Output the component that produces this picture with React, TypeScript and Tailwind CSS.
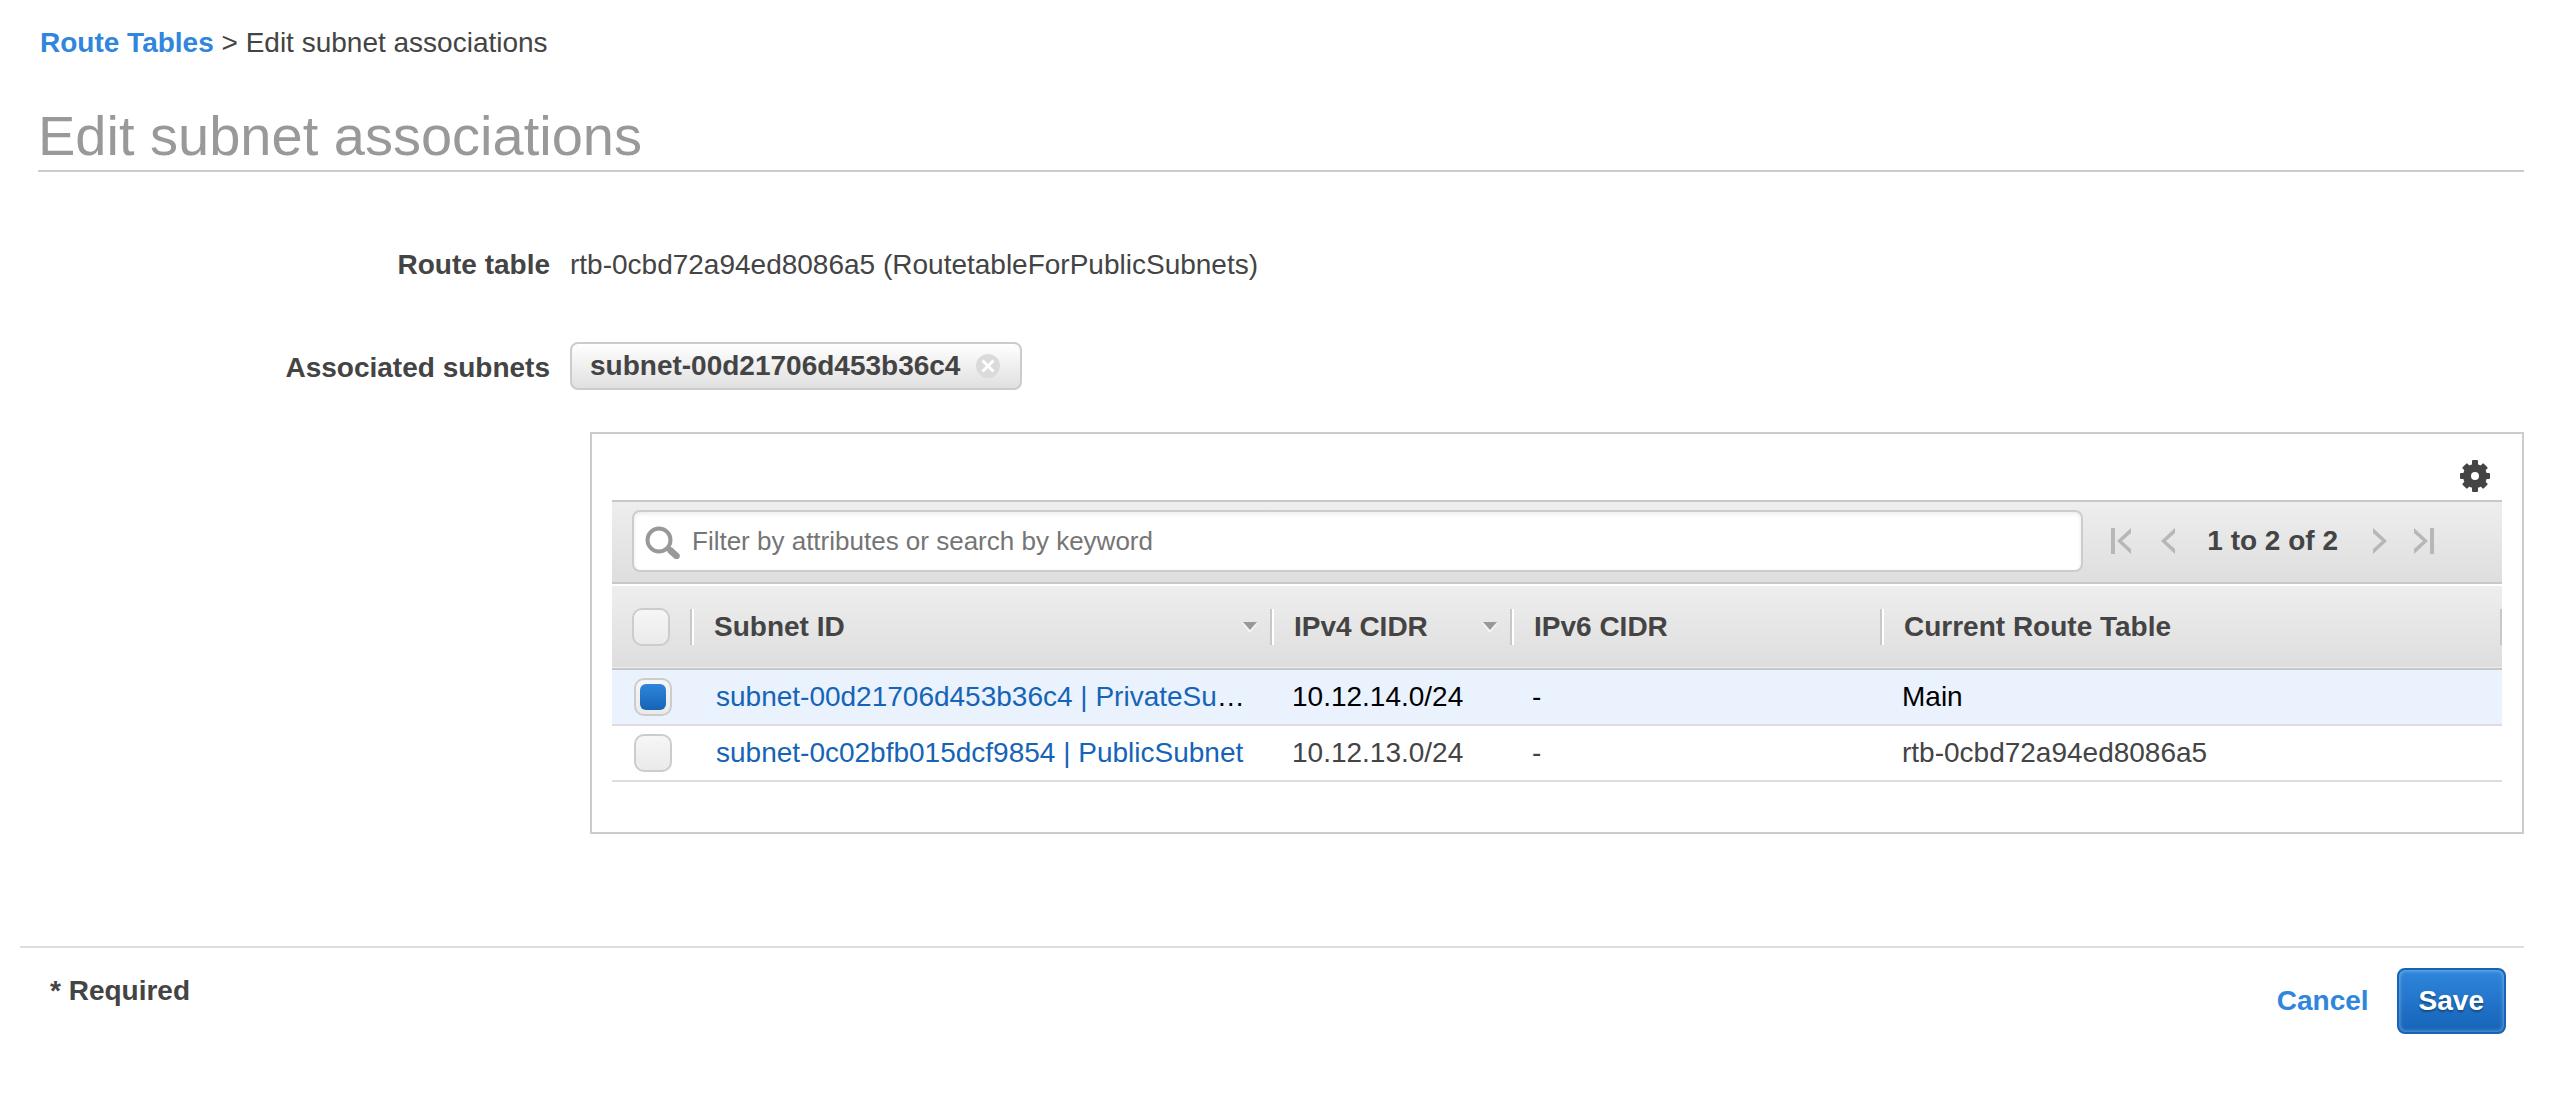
import { useState } from 'react';

const columns = [
  { label: 'Subnet ID', width: 'w-[580px]', sortable: true },
  { label: 'IPv4 CIDR', width: 'w-[240px]', sortable: true },
  { label: 'IPv6 CIDR', width: 'w-[370px]', sortable: false },
  { label: 'Current Route Table', width: '', sortable: false }
];

const subnets = [
  {
    id: 'subnet-00d21706d453b36c4',
    name: 'PrivateSubnet',
    ipv4: '10.12.14.0/24',
    ipv6: '-',
    routeTable: 'Main'
  },
  {
    id: 'subnet-0c02bfb015dcf9854',
    name: 'PublicSubnet',
    ipv4: '10.12.13.0/24',
    ipv6: '-',
    routeTable: 'rtb-0cbd72a94ed8086a5'
  }
];

const SearchIcon = () => (
  <svg className="h-9 w-9 shrink-0" viewBox="0 0 36 36" fill="none" stroke="#999" aria-hidden="true">
    <circle cx="14" cy="17" r="11.5" strokeWidth="4" />
    <path d="M22 24.5l3 2.5" strokeWidth="4" />
    <path d="M25.5 27.5l6 5.5" strokeWidth="6.5" strokeLinecap="round" />
  </svg>
);

const GearIcon = () => (
  <svg className="h-8 w-8" viewBox="0 0 32 32" aria-hidden="true">
    <g fill="#444">
      <rect x="13" y="0" width="6" height="32" rx="1" />
      <rect x="1" y="13" width="30" height="6" rx="1" />
      <rect x="12.5" y="1" width="7" height="30" rx="1" transform="rotate(45 16 16)" />
      <rect x="12.5" y="1" width="7" height="30" rx="1" transform="rotate(-45 16 16)" />
      <circle cx="16" cy="16" r="12" />
    </g>
    <circle cx="16" cy="16" r="4" fill="#fff" />
  </svg>
);

const PagerButton = ({ label, path }: { label: string; path: string }) => (
  <button type="button" aria-label={label}>
    <svg className="h-7 w-6" viewBox="0 0 24 28" fill="#b7b7b7" aria-hidden="true">
      <path d={path} />
    </svg>
  </button>
);

const Checkbox = ({ label, checked, onChange }: { label: string; checked: boolean; onChange: () => void }) => (
  <span className="grid h-[38px] w-[38px]">
    <input
      type="checkbox"
      aria-label={label}
      checked={checked}
      onChange={onChange}
      className="peer col-start-1 row-start-1 h-[38px] w-[38px] appearance-none rounded-[10px] border-2 border-[#ccc] bg-linear-to-b from-[#f6f6f6] to-[#eaeaea]"
    />
    <span className="pointer-events-none invisible col-start-1 row-start-1 m-1.5 rounded-md bg-linear-to-b from-[#2f86dc] to-[#1564b8] peer-checked:visible" />
  </span>
);

const Divider = () => <span className="h-9 w-1 shrink-0 border-l-2 border-[#c8c8c8] bg-white" />;

export default function App() {
  const [selected, setSelected] = useState<string[]>([subnets[0].id]);

  const toggle = (id: string) =>
    setSelected((prev) => (prev.includes(id) ? prev.filter((s) => s !== id) : [...prev, id]));

  const allSelected = selected.length === subnets.length;

  return (
    <main className="bg-white pt-[25px] pr-7 pl-5 font-['Liberation_Sans',Arial,sans-serif] text-[28px] leading-9 text-[#444]">
      <nav className="pl-5" aria-label="Breadcrumb">
        <a href="#" className="font-bold text-[#2f86dc]">Route Tables</a>
        <span> &gt; Edit subnet associations</span>
      </nav>

      <h1 className="mt-[43px] ml-[18px] border-b-2 border-[#ccc] pb-0.5 text-[56px] leading-[64px] text-[#999]">
        Edit subnet associations
      </h1>

      <dl className="mt-[75px] grid grid-cols-[530px_1fr] gap-x-5 gap-y-[59px]">
        <dt className="text-right font-bold">Route table</dt>
        <dd>rtb-0cbd72a94ed8086a5 (RoutetableForPublicSubnets)</dd>
        <dt className="pt-2 text-right font-bold">Associated subnets</dt>
        <dd className="flex gap-2">
          {selected.map((id) => (
            <span
              key={id}
              className="flex h-12 items-center gap-4 rounded-lg border-2 border-[#ccc] bg-linear-to-b from-white to-[#e0e0e0] pr-5 pl-[18px] font-bold"
            >
              {id}
              <button type="button" aria-label={`Remove ${id}`} onClick={() => toggle(id)}>
                <svg className="h-6 w-6" viewBox="0 0 24 24" aria-hidden="true">
                  <circle cx="12" cy="12" r="12" fill="#dadada" />
                  <path d="M6.5 6.5l11 11M17.5 6.5l-11 11" stroke="#fff" strokeWidth="3" />
                </svg>
              </button>
            </span>
          ))}
        </dd>
      </dl>

      <section className="mt-[42px] ml-[570px] border-2 border-[#ccc] px-5 pt-[26px] pb-[50px]">
        <div className="flex justify-end pr-[11px] pb-2">
          <button type="button" aria-label="Preferences">
            <GearIcon />
          </button>
        </div>

        <div className="flex h-[84px] items-center border-y-2 border-[#c8c8c8] bg-linear-to-b from-[#eee] to-[#dedede] pr-[66px] pb-0.5 pl-5">
          <label className="flex h-[62px] flex-1 items-center gap-[11px] rounded-lg border-2 border-[#ccc] bg-white pl-[11px] shadow-[inset_0_2px_4px_rgba(0,0,0,0.08)]">
            <SearchIcon />
            <input
              type="text"
              aria-label="Filter subnets"
              placeholder="Filter by attributes or search by keyword"
              className="h-full flex-1 bg-transparent text-[26px] outline-none placeholder:text-[#757575]"
            />
          </label>
          <div className="ml-[26px] flex items-center">
            <div className="flex gap-6">
              <PagerButton label="First page" path="M2 1h4v26H2zM22 1v5l-9 8 9 8v5L8 14z" />
              <PagerButton label="Previous page" path="M18 1v5l-9 8 9 8v5L4 14z" />
            </div>
            <span className="pr-[30px] pl-[26px] font-bold">1 to 2 of 2</span>
            <div className="flex gap-5">
              <PagerButton label="Next page" path="M5 1v5l9 8-9 8v5l14-13z" />
              <PagerButton label="Last page" path="M2 1v5l9 8-9 8v5l14-13zM18 1h4v26h-4z" />
            </div>
          </div>
        </div>

        <table className="mt-0.5 w-full table-fixed border-collapse text-left">
          <thead>
            <tr className="h-[83px] border-b-2 border-[#c8c8c8] bg-linear-to-b from-[#eee] to-[#dedede]">
              <th className="w-[82px] p-0">
                <div className="flex items-center justify-between pl-5">
                  <Checkbox
                    label="Select all subnets"
                    checked={allSelected}
                    onChange={() => setSelected(allSelected ? [] : subnets.map((s) => s.id))}
                  />
                  <Divider />
                </div>
              </th>
              {columns.map((column) => (
                <th key={column.label} scope="col" className={`p-0 ${column.width}`}>
                  <div className="flex items-center justify-between pl-5">
                    {column.label}
                    <span className="flex items-center gap-3">
                      {column.sortable && (
                        <svg className="h-3 w-4" viewBox="0 0 16 12" aria-hidden="true">
                          <path d="M0 2h16L8 12z" fill="#f6f6f6" />
                          <path d="M1 1h14L8 9z" fill="#999" />
                        </svg>
                      )}
                      {column.width ? <Divider /> : <span className="h-9 w-0.5 bg-[#c8c8c8]" />}
                    </span>
                  </div>
                </th>
              ))}
            </tr>
          </thead>
          <tbody>
            {subnets.map((subnet) => {
              const isSelected = selected.includes(subnet.id);
              return (
                <tr
                  key={subnet.id}
                  className={`h-14 border-b-2 border-[#ddd] ${isSelected ? 'bg-[#eaf2fe] text-black' : ''}`}
                >
                  <td className="p-0 pl-[22px]">
                    <Checkbox
                      label={`Select ${subnet.id}`}
                      checked={isSelected}
                      onChange={() => toggle(subnet.id)}
                    />
                  </td>
                  <td className="truncate p-0 pr-7 pl-[22px]">
                    <a href="#" className="text-[#1564b8]">
                      {subnet.id} | {subnet.name}
                    </a>
                  </td>
                  <td className="p-0 pl-[18px]">{subnet.ipv4}</td>
                  <td className="p-0 pl-[18px]">{subnet.ipv6}</td>
                  <td className="p-0 pl-[18px]">{subnet.routeTable}</td>
                </tr>
              );
            })}
          </tbody>
        </table>
      </section>

      <footer className="mt-28 flex items-start justify-between border-t-2 border-[#ddd] pt-5 pr-[18px] pl-[30px] font-bold">
        <p className="pt-[5px]">* Required</p>
        <div className="flex items-center gap-7">
          <button type="button" className="font-bold text-[#2f86dc]">Cancel</button>
          <button
            type="button"
            className="h-[66px] rounded-lg border-2 border-[#1564b8] bg-linear-to-b from-[#2f86dc] to-[#1564b8] px-5 font-bold text-white shadow-[inset_0_0_4px_rgba(255,255,255,0.5)] text-shadow-[0_2px_2px_rgba(0,0,0,0.35)]"
          >
            Save
          </button>
        </div>
      </footer>
    </main>
  );
}
